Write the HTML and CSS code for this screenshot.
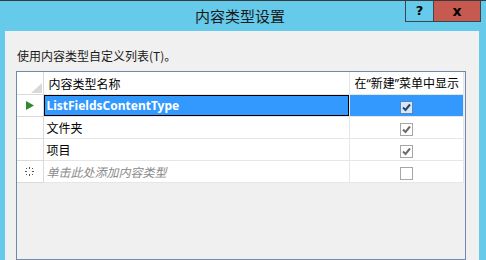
FILE: index.html
```
<!DOCTYPE html>
<html lang="zh-CN">
<head>
    <meta charset="UTF-8">
    <title>内容类型设置</title>
    <link rel="stylesheet" href="styles.css">
</head>
<body>
<div class="window">
    <div class="titlebar">
        <div class="title">内容类型设置</div>
        <div class="caption-buttons">
            <div class="cap-btn help">?</div>
            <div class="cap-btn close">x</div>
        </div>
    </div>
    <div class="content">
        <div class="label">使用内容类型自定义列表(T)。</div>
        <div class="grid">
            <table class="rows">
                <colgroup>
                    <col class="col-head">
                    <col class="col-name">
                    <col class="col-show">
                </colgroup>
                <tr class="header">
                    <td class="row-head corner"><span class="corner-mark"></span></td>
                    <td>内容类型名称</td>
                    <td class="latin-quotes">在“新建”菜单中显示</td>
                </tr>
                <tr class="selected">
                    <td class="row-head">
                        <svg width="8" height="9" viewBox="0 0 8 9"><path d="M0 0 L8 4.5 L0 9 Z" fill="#2f8a2f"/></svg>
                    </td>
                    <td class="name"><span class="focus">ListFieldsContentType</span></td>
                    <td class="check-cell"><span class="check on"><svg width="11" height="11" viewBox="0 0 11 11"><path d="M2 5.5 L4.5 8 L9 2.5" fill="none" stroke="#2c4466" stroke-width="2"/></svg></span></td>
                </tr>
                <tr>
                    <td class="row-head"></td>
                    <td class="name">文件夹</td>
                    <td class="check-cell"><span class="check"><svg width="11" height="11" viewBox="0 0 11 11"><path d="M2 5.5 L4.5 8 L9 2.5" fill="none" stroke="#6b6b6b" stroke-width="2"/></svg></span></td>
                </tr>
                <tr>
                    <td class="row-head"></td>
                    <td class="name">项目</td>
                    <td class="check-cell"><span class="check"><svg width="11" height="11" viewBox="0 0 11 11"><path d="M2 5.5 L4.5 8 L9 2.5" fill="none" stroke="#6b6b6b" stroke-width="2"/></svg></span></td>
                </tr>
                <tr class="new-row">
                    <td class="row-head">
                        <svg width="9" height="9" viewBox="0 0 9 9" fill="#555">
                            <rect x="4" y="0" width="1" height="2"/>
                            <rect x="4" y="7" width="1" height="2"/>
                            <rect x="0" y="4" width="2" height="1"/>
                            <rect x="7" y="4" width="2" height="1"/>
                            <rect x="1" y="1" width="1" height="1"/>
                            <rect x="7" y="1" width="1" height="1"/>
                            <rect x="1" y="7" width="1" height="1"/>
                            <rect x="7" y="7" width="1" height="1"/>
                        </svg>
                    </td>
                    <td class="name hint">单击此处添加内容类型</td>
                    <td class="check-cell"><span class="check empty"></span></td>
                </tr>
            </table>
        </div>
    </div>
</div>
</body>
</html>
```

FILE: styles.css
```
body {
    margin: 0;
    padding: 0;
    overflow: hidden;
    background-color: #66cbea;
    font-family: "Noto Sans", "Noto Sans CJK SC", sans-serif;
    font-size: 12px;
    color: #000;
}

.window {
    height: 260px;
    border-top: 1px solid #3a3a3a;
    box-sizing: border-box;
}

.titlebar {
    display: flex;
    height: 30px;
    padding-right: 5px;
}

.title {
    flex: 1;
    padding-left: 75px;
    text-align: center;
    font-family: "Noto Sans CJK SC", sans-serif;
    font-size: 15px;
    line-height: 30px;
    color: #1a1a1a;
}

.caption-buttons {
    display: flex;
    align-items: flex-start;
}

.cap-btn {
    height: 20px;
    border: 1px solid #3c4650;
    border-top: none;
    text-align: center;
    font-family: "DejaVu Sans", sans-serif;
    font-weight: bold;
    font-size: 13px;
    line-height: 20px;
}

.help {
    width: 27px;
    background-color: #66cbea;
}

.close {
    width: 46px;
    border-left: none;
    background-color: #c75a50;
    font-size: 14px;
}

.content {
    margin: 0 7px 0 5px;
    height: 229px;
    background-color: #f0f0f0;
    padding: 11px 0 0 11px;
    box-sizing: border-box;
}

.label {
    height: 29px;
    padding-left: 1px;
    line-height: 28px;
    font-family: "Noto Sans CJK SC", sans-serif;
    color: #1a1a1a;
}

.grid {
    width: 448px;
    height: 187px;
    border: 1px solid #7088aa;
    background-color: #f0f0f0;
}

.rows {
    border-collapse: collapse;
    table-layout: fixed;
    width: 446px;
}

.col-head {
    width: 26px;
}

.col-name {
    width: 306px;
}

.col-show {
    width: 114px;
}

.rows td {
    height: 21px;
    padding: 0 0 0 5px;
    background-color: #fff;
    border: 1px solid #e6e6e6;
    border-top: none;
    border-left: none;
    white-space: nowrap;
    overflow: hidden;
    font-family: "Noto Sans CJK SC", sans-serif;
}

.rows td.latin-quotes {
    font-family: "Noto Sans", "Noto Sans CJK SC", sans-serif;
}

.rows td.row-head {
    padding: 0;
    text-align: center;
    border-color: #dadada;
}

.row-head svg {
    display: block;
    margin: 0 auto;
}

.corner {
    position: relative;
}

.corner-mark {
    position: absolute;
    right: 1px;
    bottom: 1px;
    width: 0;
    height: 0;
    border-left: 11px solid transparent;
    border-bottom: 10px solid #d9d9d9;
}

.header td {
    height: 22px;
}

.selected td.name,
.selected td.check-cell {
    background-color: #3399ff;
    color: #fff;
}

.rows td.name {
    padding-left: 3px;
}

.rows .selected td.name {
    padding-left: 0;
}

.focus {
    display: block;
    height: 19px;
    border: 1px solid #000;
    padding-left: 2px;
    line-height: 19px;
    font-family: "Noto Sans", sans-serif;
    font-weight: bold;
    font-size: 12px;
}

.hint {
    font-style: italic;
    color: #8a8a8a;
}

.rows td.check-cell {
    padding: 0;
    text-align: center;
}

.check {
    display: inline-block;
    width: 11px;
    height: 11px;
    border: 1px solid #a6a6a6;
    background-color: #fff;
    vertical-align: middle;
}

.check svg {
    display: block;
}

.check.on {
    border-color: #5b87b8;
    background-color: #d5e8fa;
}
```
